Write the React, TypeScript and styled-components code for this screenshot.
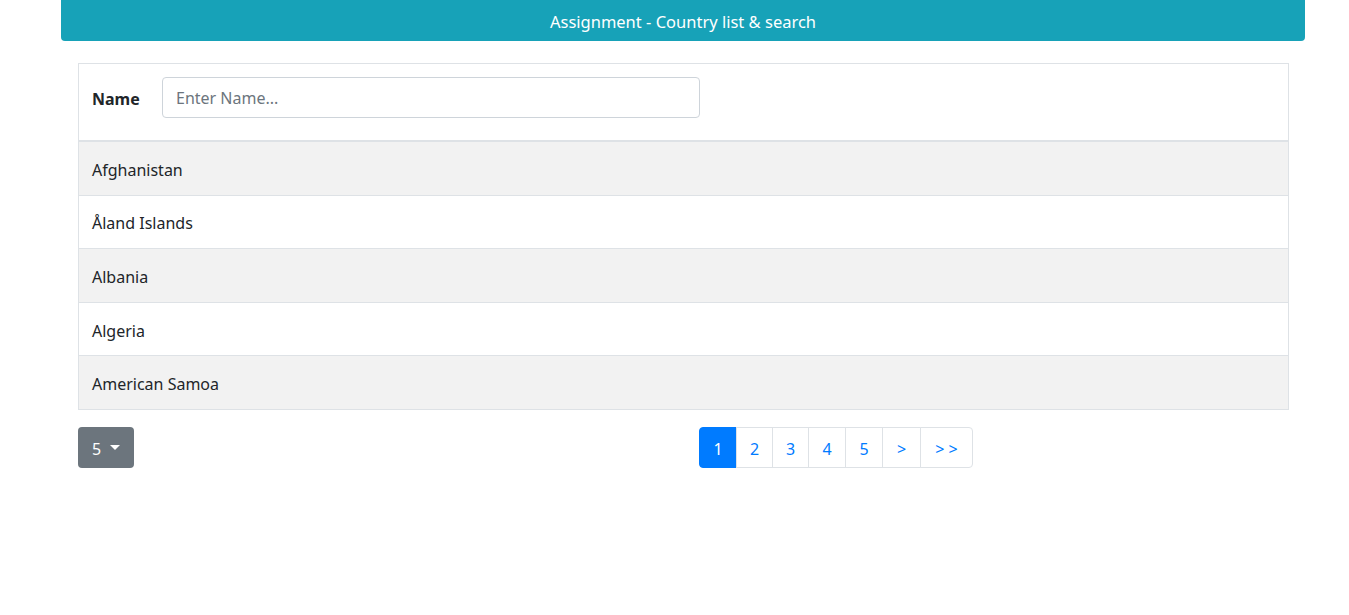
import React, { useState } from 'react';
import styled, { createGlobalStyle } from 'styled-components';

const GlobalStyle = createGlobalStyle`
    body {
        margin: 0;
        background: #fff;
        font-family: "Segoe UI", "Noto Sans", "Open Sans", sans-serif;
        font-size: 16px;
        color: #212529;
    }
`

const Page = styled.div`
    padding: 0 44px 0 61px;
`

/** 顶部标题栏 */
const Header = styled.div`
    height: 41px;
    background-color: #17a2b8;
    color: #fff;
    border-radius: 0 0 4px 4px;
    display: flex;
    align-items: center;
    justify-content: center;
    font-size: 16.5px;
    padding-top: 1px;
    box-sizing: border-box;
`

const Content = styled.div`
    margin: 22px 16px 0 17px;
`

const Table = styled.div`
    border: 1px solid #dee2e6;
`

const FilterRow = styled.div`
    display: flex;
    align-items: flex-start;
    height: 78px;
    padding: 13px 13px 0;
    box-sizing: border-box;
    border-bottom: 2px solid #dee2e6;
`

const Label = styled.label`
    font-weight: 700;
    width: 70px;
    line-height: 41px;
    padding-top: 2px;
`

const Input = styled.input`
    width: 538px;
    height: 41px;
    box-sizing: border-box;
    padding: 1px 13px 0;
    border: 1px solid #ced4da;
    border-radius: 4px;
    font-family: inherit;
    font-size: 16px;
    color: #495057;
    &::placeholder {
        color: #6c757d;
    }
    &:focus {
        outline: none;
    }
`

const Row = styled.div<{ striped: boolean }>`
    height: 52.6px;
    box-sizing: border-box;
    display: flex;
    align-items: center;
    padding: 3px 13px 0;
    background-color: ${props => props.striped ? '#f2f2f2' : '#fff'};
    & + & {
        border-top: 1px solid #dee2e6;
        height: 53.6px;
    }
`

const Footer = styled.div`
    display: grid;
    grid-template-columns: 590px 1fr;
    column-gap: 31px;
    margin-top: 17px;
`

const Dropdown = styled.button`
    width: 56px;
    height: 41px;
    background-color: #6c757d;
    color: #fff;
    border: none;
    border-radius: 4px;
    font-family: inherit;
    font-size: 16px;
    display: flex;
    align-items: center;
    justify-content: center;
    gap: 9px;
    padding: 3px 0 0;
`

const Caret = styled.span`
    width: 0;
    height: 0;
    margin-top: -3px;
    border-left: 5px solid transparent;
    border-right: 5px solid transparent;
    border-top: 5px solid #fff;
`

const Pagination = styled.div`
    display: flex;
`

const PageItem = styled.button<{ active?: boolean; w: number }>`
    width: ${props => props.w}px;
    height: 41px;
    box-sizing: border-box;
    border: 1px solid ${props => props.active ? '#007bff' : '#dee2e6'};
    margin-left: -1px;
    background-color: ${props => props.active ? '#007bff' : '#fff'};
    color: ${props => props.active ? '#fff' : '#007bff'};
    font-family: inherit;
    font-size: 16px;
    padding: 3px 0 0;
    &:first-child {
        margin-left: 0;
        border-radius: 4px 0 0 4px;
    }
    &:last-child {
        border-radius: 0 4px 4px 0;
    }
`

const countries = ['Afghanistan', 'Åland Islands', 'Albania', 'Algeria', 'American Samoa'];

const pages = [
    { label: '1', w: 38 },
    { label: '2', w: 37 },
    { label: '3', w: 37 },
    { label: '4', w: 38 },
    { label: '5', w: 38 },
    { label: '>', w: 39 },
    { label: '> >', w: 53 },
];

export default function App() {
    const [name, setName] = useState('');

    return (
        <Page>
            <GlobalStyle />
            <Header>Assignment - Country list &amp; search</Header>
            <Content>
                <Table>
                    <FilterRow>
                        <Label>Name</Label>
                        <Input
                            placeholder="Enter Name..."
                            value={name}
                            onChange={e => setName(e.target.value)}
                        />
                    </FilterRow>
                    {countries.map((c, i) => (
                        <Row key={c} striped={i % 2 === 0}>{c}</Row>
                    ))}
                </Table>
                <Footer>
                    <div>
                        <Dropdown>5 <Caret /></Dropdown>
                    </div>
                    <Pagination>
                        {pages.map((p, i) => (
                            <PageItem key={p.label} w={p.w} active={i === 0}>{p.label}</PageItem>
                        ))}
                    </Pagination>
                </Footer>
            </Content>
        </Page>
    );
}
